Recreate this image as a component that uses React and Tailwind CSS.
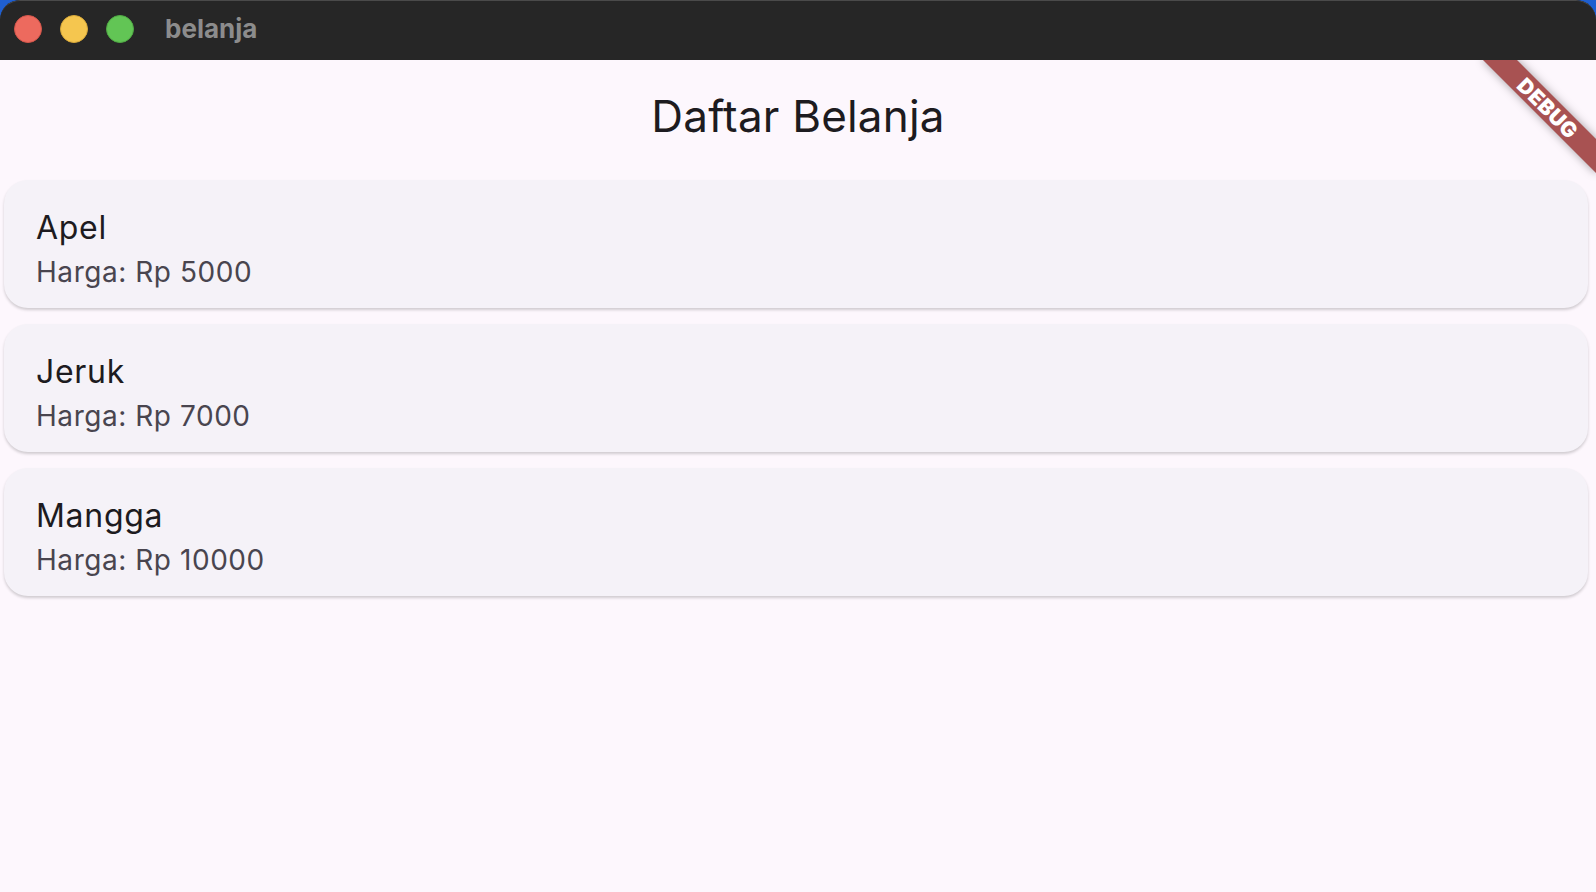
const items = [
  { name: 'Apel', price: 5000 },
  { name: 'Jeruk', price: 7000 },
  { name: 'Mangga', price: 10000 },
]

const font = { fontFamily: 'Inter, "Noto Sans", sans-serif' }

export default function App() {
  return (
    <div className="w-[1596px] h-[892px] bg-[#1f5fd0] overflow-hidden" style={font}>
      <div className="w-full h-full rounded-t-[20px] overflow-hidden flex flex-col bg-[#262626]">
        {/* Title bar */}
        <div className="h-[60px] shrink-0 bg-[#262626] flex items-center pl-[14px] pb-[4px] border-t border-[#4a4a4a] rounded-t-[20px]">
          <div className="flex items-center gap-[18px]">
            <span className="w-[28px] h-[28px] rounded-full bg-[#ed6a5e] border border-[#d4564b]" />
            <span className="w-[28px] h-[28px] rounded-full bg-[#f5c64f] border border-[#d8a93a]" />
            <span className="w-[28px] h-[28px] rounded-full bg-[#62c555] border border-[#50a944]" />
          </div>
          <span className="ml-[31px] text-[26px] font-bold text-[#8c8c8c] leading-none">belanja</span>
        </div>

        {/* Content */}
        <div className="relative flex-1 bg-[#fdf7fd] overflow-hidden">
          <header className="h-[112px] flex items-center justify-center">
            <h1 className="text-[44px] text-[#1d1b20] leading-none tracking-[0.2px]">Daftar Belanja</h1>
          </header>

          <div className="pt-[8px] flex flex-col gap-[16px]">
            {items.map((item) => (
              <div
                key={item.name}
                className="ml-[4px] mr-[8px] h-[128px] rounded-[24px] bg-[#f5f2f8] shadow-[0_2px_3px_rgba(0,0,0,0.18)] px-[32px] pt-[24px]"
              >
                <p className="text-[32px] leading-[48px] text-[#1d1b20] tracking-[0.7px]">{item.name}</p>
                <p className="text-[28px] leading-[40px] text-[#49454f] tracking-[0.55px]">Harga: Rp {item.price}</p>
              </div>
            ))}
          </div>

          {/* Debug banner */}
          <div className="absolute top-[36px] right-[-32px] w-[160px] h-[24px] rotate-45 bg-[#a85252] shadow-[0_0_10px_rgba(0,0,0,0.35)] flex items-center justify-center">
            <span className="text-white text-[21px] font-black leading-none tracking-[0.5px]">DEBUG</span>
          </div>
        </div>
      </div>
    </div>
  )
}
